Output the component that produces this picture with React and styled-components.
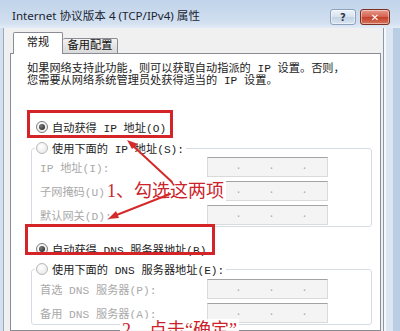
import React from "react";
import styled, { createGlobalStyle } from "styled-components";

const Global = createGlobalStyle`
  html, body { margin: 0; padding: 0; background: #fff; }
  body { width: 400px; height: 331px; overflow: hidden; }
`;

const Window = styled.div`
  position: relative;
  width: 400px;
  height: 331px;
  overflow: hidden;
  display: flex;
  flex-direction: column;
  background: #d5e2f0;
  font-family: "Liberation Mono", "Noto Sans CJK SC", monospace;
  font-size: 11.2px;
  color: #1c1c1c;
`;

const TitleBar = styled.div`
  height: 28px;
  flex: none;
  display: flex;
  align-items: flex-start;
  justify-content: space-between;
  padding: 0 10px 0 12px;
  background: linear-gradient(#c0d3e9, #d2e0f0 82%, #e4ecf6);
`;

const Title = styled.div`
  font-family: "Noto Sans", "Noto Sans CJK SC", sans-serif;
  font-size: 11.6px;
  line-height: 16px;
  padding-top: 8px;
  color: #1b2533;
  white-space: nowrap;
`;

const CaptionButtons = styled.div`
  display: flex;
  gap: 4px;
  padding-top: 9px;
`;

const CaptionButton = styled.div`
  width: ${(p) => (p.$close ? 30 : 26)}px;
  height: 16px;
  box-sizing: border-box;
  border-radius: 3px;
  display: flex;
  align-items: center;
  justify-content: center;
  font-family: "DejaVu Sans", sans-serif;
  font-weight: bold;
  font-size: 10px;
  border: 1px solid ${(p) => (p.$close ? "#7d2d24" : "#8ea2bb")};
  color: ${(p) => (p.$close ? "#fff" : "#2d3a4a")};
  background: ${(p) =>
    p.$close
      ? "linear-gradient(#e59a8c, #d4614d 50%, #c2402c 52%, #d6745a)"
      : "linear-gradient(#eef3f9, #d7e2ee 50%, #c3d3e5 52%, #d9e5f1)"};
  box-shadow: inset 0 0 0 1px rgba(255, 255, 255, 0.45);
`;

const Body = styled.div`
  flex: 1;
  display: flex;
  min-height: 0;
`;

const LeftFrame = styled.div`
  width: 5px;
  flex: none;
  background: linear-gradient(to right, #d3e0ee 0 3px, #9aa7b6 3px 4px, #eef2f7 4px);
`;

const RightFrame = styled.div`
  width: 17px;
  flex: none;
  background: linear-gradient(
    to right,
    #8c98a6 0 1px,
    #f4f7fb 1px 3px,
    #dbe6f2 3px 10px,
    #b9cde3 10px
  );
`;

const Content = styled.div`
  flex: 1;
  min-width: 0;
  background: #f0f0f0;
  padding: 4px 2px 0 5px;
  display: flex;
  flex-direction: column;
`;

const TabRow = styled.div`
  display: flex;
  align-items: flex-end;
  height: 22px;
  padding-left: 3px;
  margin-bottom: -1px;
  position: relative;
  z-index: 1;
`;

const Tab = styled.div`
  box-sizing: border-box;
  width: ${(p) => (p.$active ? 50 : 55)}px;
  height: ${(p) => (p.$active ? 22 : 16)}px;
  border: 1px solid #898c95;
  border-bottom: ${(p) => (p.$active ? "none" : "1px solid #898c95")};
  border-left: ${(p) => (p.$active ? "1px solid #898c95" : "none")};
  border-radius: 2px 2px 0 0;
  background: ${(p) => (p.$active ? "#fff" : "linear-gradient(#f3f3f3, #e4e4e4 50%, #dadada)")};
  text-align: center;
  line-height: ${(p) => (p.$active ? 20 : 15)}px;
  white-space: nowrap;
  color: #111;
`;

const Panel = styled.div`
  flex: 1;
  background: #fff;
  border: 1px solid #898c95;
  padding: 9px 8px 0 16px;
  display: flex;
  flex-direction: column;
  min-height: 0;
`;

const Para = styled.p`
  margin: 0;
  line-height: 12px;
  white-space: nowrap;
`;

const RadioRow = styled.div`
  display: flex;
  align-items: center;
  gap: 4px;
  height: 18px;
  margin: ${(p) => p.$mt || 0}px 0 0 9px;
  white-space: nowrap;
`;

const Radio = styled.span`
  position: relative;
  width: 12px;
  height: 12px;
  box-sizing: border-box;
  border-radius: 50%;
  flex: none;
  border: 1px solid ${(p) => (p.$checked ? "#7d7d7d" : "#b8b8b8")};
  background: radial-gradient(circle at 40% 35%, #ffffff, #e4e4e4);
  &::after {
    content: "";
    display: ${(p) => (p.$checked ? "block" : "none")};
    position: absolute;
    left: 2px;
    top: 2px;
    width: 6px;
    height: 6px;
    border-radius: 50%;
    background: radial-gradient(circle at 35% 35%, #7a7a7a, #1e1e1e);
  }
`;

const Group = styled.fieldset`
  margin: ${(p) => p.$mt}px 0 0 4px;
  padding: ${(p) => p.$pt || 0}px 0 1px 0;
  border: 1px solid #d5dde4;
  border-radius: 3px;
  min-width: 0;
`;

const GroupLegend = styled.legend`
  margin-left: 3px;
  padding: 0 2px 0 1px;
`;

const LegendRow = styled.div`
  display: flex;
  align-items: center;
  gap: 4px;
  height: 18px;
  white-space: nowrap;
`;

const FieldRow = styled.div`
  display: flex;
  align-items: center;
  justify-content: space-between;
  height: 20px;
  padding: 0 43px 0 8px;
  & + & {
    margin-top: ${(p) => p.$gap || 3}px;
  }
`;

const FieldLabel = styled.span`
  color: #a9a9a9;
  white-space: nowrap;
`;

const IpField = styled.div`
  width: 121px;
  height: 20px;
  box-sizing: border-box;
  border: 1px solid #dadada;
  border-top-color: #a3a3a3;
  background: #f4f4f4;
  display: flex;
  align-items: center;
  justify-content: space-around;
  padding: 0 6px 0 14px;
  color: #a8a8a8;
  font-size: 10px;
  line-height: 1;
`;

const RedBox = styled.div`
  position: absolute;
  left: ${(p) => p.$x}px;
  top: ${(p) => p.$y}px;
  width: ${(p) => p.$w}px;
  height: ${(p) => p.$h}px;
  box-sizing: border-box;
  border: 3px solid #d42428;
  pointer-events: none;
`;

const Note = styled.div`
  position: absolute;
  left: ${(p) => p.$x}px;
  top: ${(p) => p.$y}px;
  font-family: "Liberation Serif", "Noto Sans CJK SC", serif;
  font-size: 18px;
  line-height: 22px;
  color: #cc2229;
  white-space: nowrap;
  background: rgba(255, 255, 255, 0.92);
  padding: 0 2px;
`;

const ArrowLayer = styled.svg`
  position: absolute;
  left: 0;
  top: 0;
  pointer-events: none;
`;

function IpBox() {
  return (
    <IpField>
      <span>.</span>
      <span>.</span>
      <span>.</span>
    </IpField>
  );
}

export default function App() {
  return (
    <>
      <Global />
      <Window>
        <TitleBar>
          <Title>Internet 协议版本 4 (TCP/IPv4) 属性</Title>
          <CaptionButtons>
            <CaptionButton>?</CaptionButton>
            <CaptionButton $close>✕</CaptionButton>
          </CaptionButtons>
        </TitleBar>
        <Body>
          <LeftFrame />
          <Content>
            <TabRow>
              <Tab $active>常规</Tab>
              <Tab>备用配置</Tab>
            </TabRow>
            <Panel>
              <Para>
                如果网络支持此功能，则可以获取自动指派的 IP 设置。否则，
                <br />
                您需要从网络系统管理员处获得适当的 IP 设置。
              </Para>

              <RadioRow $mt={31}>
                <Radio $checked />
                <span>自动获得 IP 地址(O)</span>
              </RadioRow>

              <Group $mt={3}>
                <GroupLegend>
                  <LegendRow>
                    <Radio />
                    <span>使用下面的 IP 地址(S):</span>
                  </LegendRow>
                </GroupLegend>
                <FieldRow>
                  <FieldLabel>IP 地址(I):</FieldLabel>
                  <IpBox />
                </FieldRow>
                <FieldRow>
                  <FieldLabel>子网掩码(U):</FieldLabel>
                  <IpBox />
                </FieldRow>
                <FieldRow>
                  <FieldLabel>默认网关(D):</FieldLabel>
                  <IpBox />
                </FieldRow>
              </Group>

              <RadioRow $mt={13}>
                <Radio $checked />
                <span>自动获得 DNS 服务器地址(B)</span>
              </RadioRow>

              <Group $mt={2} $pt={1}>
                <GroupLegend>
                  <LegendRow>
                    <Radio />
                    <span>使用下面的 DNS 服务器地址(E):</span>
                  </LegendRow>
                </GroupLegend>
                <FieldRow>
                  <FieldLabel>首选 DNS 服务器(P):</FieldLabel>
                  <IpBox />
                </FieldRow>
                <FieldRow $gap={4}>
                  <FieldLabel>备用 DNS 服务器(A):</FieldLabel>
                  <IpBox />
                </FieldRow>
              </Group>
            </Panel>
          </Content>
          <RightFrame />
        </Body>

        <RedBox $x={27} $y={110} $w={146} $h={28} />
        <RedBox $x={25} $y={224} $w={190} $h={31} />

        <Note $x={105} $y={180}>1、勾选这两项</Note>
        <Note $x={120} $y={319}>2、点击“确定”</Note>

        <ArrowLayer width="400" height="331" viewBox="0 0 400 331">
          <g stroke="#d42a2a" strokeWidth="2" strokeLinecap="round" fill="#d42a2a">
            <line x1="172" y1="182" x2="131" y2="144" />
            <polygon points="127,140 138,144 132,149" stroke="none" />
            <line x1="170" y1="194" x2="114" y2="216" />
            <polygon points="108,219 116,211 119,218" stroke="none" />
          </g>
        </ArrowLayer>
      </Window>
    </>
  );
}
